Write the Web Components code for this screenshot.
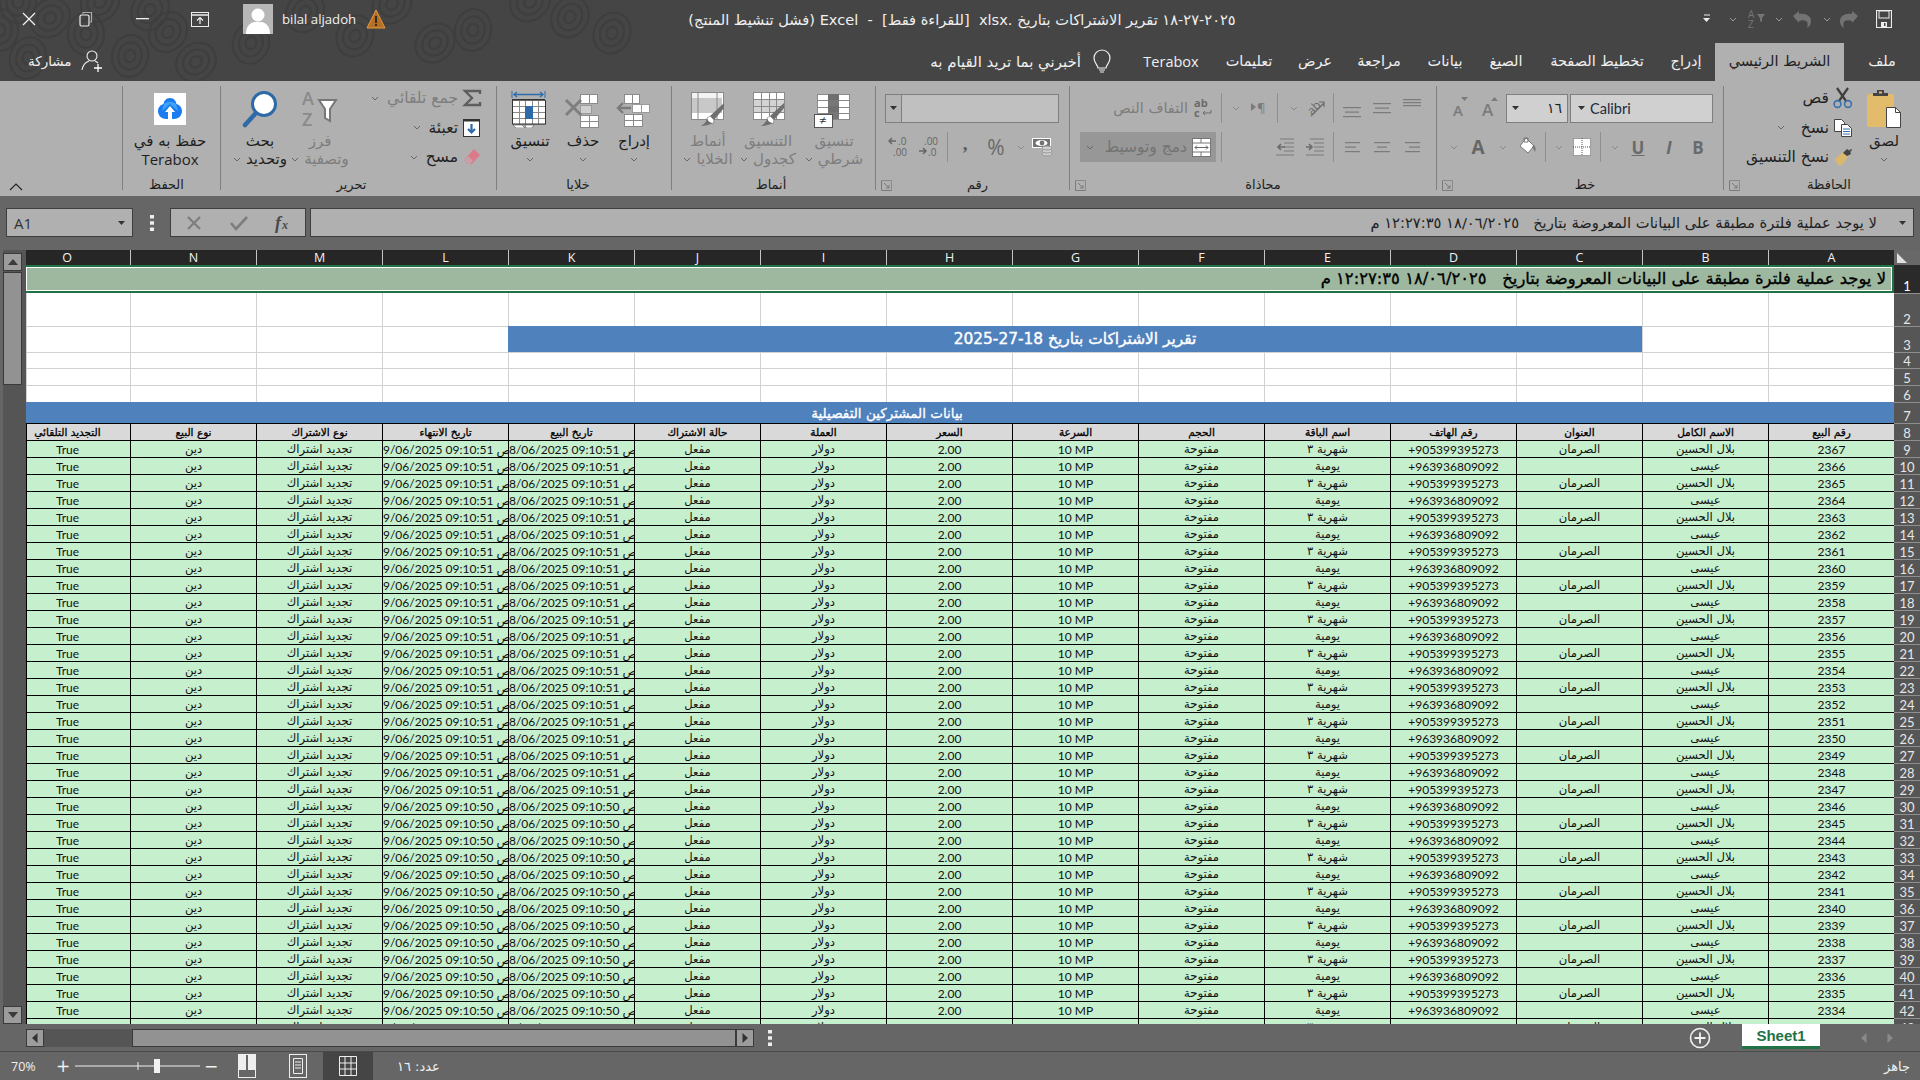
<!DOCTYPE html>
<html lang="ar" dir="rtl"><head><meta charset="utf-8"><title>Excel</title>
<style>
html,body{margin:0;padding:0;background:#666}
body{width:1920px;height:1080px;overflow:hidden;display:flex;flex-direction:column;font-family:"DejaVu Sans",sans-serif;font-size:15.5px;color:#1f1f1f}
.r{display:flex;align-items:center;height:30px}
.dis{color:#7d7d7d}
.txt{white-space:nowrap}
.stack3{display:flex;flex-direction:column;gap:5.5px}
.two{display:flex;flex-direction:column;gap:9px;padding-top:7px}
.fnt{display:flex;align-items:center;height:29px;box-sizing:border-box;border:1px solid #7f7f7f;background:#d0d0d0}
</style>
</head><body>
<x-titlebar>
<span slot="title">٢٠٢٥-٢٧-١٨ تقرير الاشتراكات بتاريخ .xlsx &nbsp;[للقراءة فقط] &nbsp;- &nbsp;Excel (فشل تنشيط المنتج)</span>
<span slot="user" dir="ltr">bilal aljadoh</span>
<x-tabs>
<x-tab w="76">ملف</x-tab><x-tab w="129" active>الشريط الرئيسي</x-tab><x-tab w="58">إدراج</x-tab><x-tab w="120">تخطيط الصفحة</x-tab><x-tab w="62">الصيغ</x-tab><x-tab w="60">بيانات</x-tab><x-tab w="72">مراجعة</x-tab><x-tab w="56">عرض</x-tab><x-tab w="76">تعليمات</x-tab><x-tab w="80" style="font-family:'Open Sans',sans-serif">Terabox</x-tab>
<span slot="help">أخبرني بما تريد القيام به</span><span slot="share">مشاركة</span>
</x-tabs></x-titlebar>
<x-ribbon>
<x-group w="197" pr="6" label="الحافظة" launch>
 <x-big w="60" l1="لصق" caret><x-ico n="paste"></x-ico></x-big>
 <div class="stack3" style="margin-right:1px">
  <x-small n="cut">قص</x-small><x-small n="copy" caret cg="16">نسخ</x-small><x-small n="painter">نسخ التنسيق</x-small>
 </div>
</x-group>
<x-group w="287" pr="10" label="خط" launch>
 <div class="two">
  <div class="r" style="height:30px"><div class="fnt" style="width:143px;padding:0 7px;gap:5px;font-family:Lato,sans-serif;font-size:14.5px;direction:ltr"><x-ico n="down"></x-ico><span style="color:#1c2a40;flex:1;text-align:left">Calibri</span></div><div class="fnt" style="width:62px;margin-right:2px;padding:0 5px;justify-content:space-between;font-size:14px"><span>١٦</span><x-ico n="down"></x-ico></div>
   <x-t w="28" style="margin-right:2px"><x-ico n="grow"></x-ico></x-t><x-t w="31"><x-ico n="shrink"></x-ico></x-t></div>
  <div class="r">
   <x-t w="30" style="font:700 17px 'Open Sans';color:#6a6a6a">B</x-t><x-t w="28" style="font:italic 700 17px 'Open Sans';color:#6a6a6a">I</x-t><x-t w="34" style="font:700 17px 'Open Sans';color:#6a6a6a;text-decoration:underline">U</x-t><x-t w="12"><x-ico n="cl"></x-ico></x-t>
   <x-t w="8"></x-t><x-sep></x-sep><x-t w="7"></x-t><x-t w="22"><x-ico n="border"></x-ico></x-t><x-t w="25"><x-ico n="cl"></x-ico></x-t><x-sep></x-sep><x-t w="36"><x-ico n="bucket"></x-ico></x-t><x-t w="12"><x-ico n="cl"></x-ico></x-t><x-t w="38" style="font:700 19px 'Open Sans';color:#666">A</x-t><x-t w="10"><x-ico n="cl"></x-ico></x-t>
  </div>
 </div>
</x-group>
<x-group w="367" label="محاذاة" launch>
 <div class="two">
  <div class="r">
   <x-t w="15"></x-t><x-t w="18"><x-ico n="atop"></x-ico></x-t><x-t w="12"></x-t><x-t w="18"><x-ico n="amid"></x-ico></x-t><x-t w="12"></x-t><x-t w="18"><x-ico n="abot"></x-ico></x-t><x-t w="9"></x-t><x-sep></x-sep><x-t w="3"></x-t><x-t w="28"><x-ico n="orient"></x-ico></x-t><x-t w="16"><x-ico n="cl"></x-ico></x-t><x-t w="8"></x-t><x-sep></x-sep><x-t w="3"></x-t><x-t w="30"><x-ico n="para"></x-ico></x-t><x-t w="16"><x-ico n="cl"></x-ico></x-t><x-t w="6"></x-t><x-sep></x-sep><x-t w="6"></x-t><x-t w="24"><x-ico n="wrap"></x-ico></x-t><span class="dis txt" style="margin-right:3px;font-size:14.500px">التفاف النص</span>
  </div>
  <div class="r">
   <x-t w="15"></x-t><x-t w="18"><x-ico n="aright"></x-ico></x-t><x-t w="12"></x-t><x-t w="18"><x-ico n="acenter"></x-ico></x-t><x-t w="12"></x-t><x-t w="18"><x-ico n="aleft"></x-ico></x-t><x-t w="9"></x-t><x-sep></x-sep><x-t w="9"></x-t><x-t w="18"><x-ico n="ind1"></x-ico></x-t><x-t w="12"></x-t><x-t w="18"><x-ico n="ind2"></x-ico></x-t><x-t w="54"></x-t><x-sep></x-sep><x-t w="5"></x-t>
   <div style="width:136px;height:30px;background:#979797;display:flex;align-items:center;flex:none"><x-t w="29"><x-ico n="merge"></x-ico></x-t><span class="txt" style="color:#737373;flex:1;font-size:15.500px">دمج وتوسيط</span><x-t w="20"><x-ico n="c"></x-ico></x-t></div>
  </div>
 </div>
</x-group>
<x-group w="194" pr="10" label="رقم" launch>
 <div class="two">
  <div class="r"><div class="fnt" style="width:174px;background:#c0c0c0;padding:0;direction:ltr"><x-t w="15" style="background:#b4b4b4;border-right:1px solid #7f7f7f;height:27px"><x-ico n="down"></x-ico></x-t></div></div>
  <div class="r" style="margin-right:-10px">
   <x-t w="14"></x-t><x-t w="24"><x-ico n="money"></x-ico></x-t><x-t w="20"><x-ico n="cl"></x-ico></x-t><x-t w="30" style="font:21px 'Open Sans';color:#6a6a6a">%</x-t><x-t w="32" style="font:700 19px 'Liberation Serif';color:#5c5c5c;padding-bottom:7px">,</x-t><x-t w="1"></x-t><x-sep></x-sep><x-t w="34"><x-ico n="dec1"></x-ico></x-t><x-t w="28"><x-ico n="dec2"></x-ico></x-t>
  </div>
 </div>
</x-group>
<x-group w="204" pr="5" label="أنماط">
 <x-big w="72" dis l1="تنسيق" l2="شرطي" caret><x-ico n="cond"></x-ico></x-big>
 <x-big w="60" dis l1="التنسيق" l2="كجدول" caret><x-ico n="table"></x-ico></x-big>
 <x-big w="60" dis l1="أنماط" l2="الخلايا" caret><x-ico n="cstyle"></x-ico></x-big>
</x-group>
<x-group w="175" pr="12" label="خلايا">
 <x-big w="50" l1="إدراج" caret><x-ico n="ins"></x-ico></x-big>
 <x-big w="52" l1="حذف" caret><x-ico n="del"></x-ico></x-big>
 <x-big w="54" l1="تنسيق" caret><x-ico n="fmt"></x-ico></x-big>
</x-group>
<x-group w="276" pr="14" label="تحرير">
 <div class="stack3" style="width:132px">
  <x-small n="sigma" caret class="dis">جمع تلقائي</x-small><x-small n="fill" caret>تعبئة</x-small><x-small n="eraser" caret>مسح</x-small>
 </div>
 <x-big w="60" dis l1="فرز" l2="وتصفية" caret><x-ico n="sort"></x-ico></x-big>
 <x-big w="60" l1="بحث" l2="وتحديد" caret><x-ico n="find"></x-ico></x-big>
</x-group>
<x-group w="98" pr="10" label="الحفظ">
 <x-big w="80" l1="حفظ به في" l2="<span class='lat'>Terabox</span>"><x-ico n="terabox"></x-ico></x-big>
</x-group>
</x-ribbon>
<x-formula>لا يوجد عملية فلترة مطبقة على البيانات المعروضة بتاريخ &nbsp;&nbsp;١٨/٠٦/٢٠٢٥ ١٢:٢٧:٣٥ م</x-formula>
<div style="display:flex;direction:ltr;flex:none;height:774px"><x-vscroll></x-vscroll><x-sheet></x-sheet></div>
<x-foot>Sheet1</x-foot>
<x-status><span slot="count">عدد: ١٦</span>جاهز</x-status>
<script>
const G='#7b7b7b';
const lines=(w,h,arr,c=G)=>`<svg width="${w}" height="${h}" viewBox="0 0 ${w} ${h}">`+arr.map(a=>`<rect x="${a[0]}" y="${a[1]}" width="${a[2]}" height="1.2" fill="${c}"/>`).join('')+`</svg>`;
const svg=(w,h,b,vb)=>`<svg width="${w}" height="${h}" viewBox="${vb||`0 0 ${w} ${h}`}">${b}</svg>`;
const gridc=(x,y,w,h,cols,rows,fill='#fff',st='#8a8a8a')=>{let s=`<rect x="${x+.5}" y="${y+.5}" width="${w}" height="${h}" fill="${fill}" stroke="${st}"/>`;for(let i=1;i<cols;i++){const X=Math.round(x+w*i/cols)+.5;s+=`<path d="M${X} ${y}v${h}" stroke="${st}"/>`}for(let i=1;i<rows;i++){const Y=Math.round(y+h*i/rows)+.5;s+=`<path d="M${x} ${Y}h${w}" stroke="${st}"/>`}return s};
const brush=(x,y)=>`<g transform="translate(${x} ${y})"><path d="M23 0v5L13 17l-4-4z" fill="#6f6f6f"/><path d="M9 13l4 4-1 4-5-2-1-4z" fill="#fff" stroke="#6f6f6f" stroke-width=".6"/><path d="M6 16c1 2 3 4 6 4-4 2-8 3-12 3 3-2 5-4 6-7z" fill="#6f6f6f"/></g>`;
const I={
c:svg(8,5,`<path d="M1 1l3 3 3-3" fill="none" stroke="#666" stroke-width="1"/>`),
cl:svg(8,5,`<path d="M1 1l3 3 3-3" fill="none" stroke="#8a8a8a" stroke-width="1"/>`),
cu:svg(14,8,`<path d="M1 7l6-6 6 6" fill="none" stroke="#222" stroke-width="1.1"/>`),
down:svg(7,4,`<path d="M0 0h7l-3.5 4z" fill="#333"/>`),
launch:svg(11,11,`<path d="M.5 .5h10v10" fill="none" stroke="#8a8a8a"/><path d="M.5 .5v10h10M3 3l5 5M8 5v3H5" fill="none" stroke="#7a7a7a"/>`),
grow:svg(20,24,`<text x="2" y="20" font-size="17" font-weight="600" font-family="Open Sans" fill="#7b7b7b">A</text><path d="M11 5h7l-3.500-4z" fill="#7b7b7b"/>`),
shrink:svg(20,24,`<text x="2" y="20" font-size="15" font-weight="600" font-family="Open Sans" fill="#7b7b7b">A</text><path d="M10 1h7l-3.500 4z" fill="#7b7b7b"/>`),
paste:svg(38,38,`<rect x="2" y="4" width="27" height="33" rx="2" fill="#e2bb6b"/><path d="M8 6h15V3h-4V0h-7v3H8z" fill="#444"/><rect x="14" y="1.5" width="3" height="2" fill="#e2bb6b"/><path d="M21.5 17.5h9l5 5v15h-14z" fill="#fff" stroke="#444"/><path d="M30.5 17.5v5h5" fill="none" stroke="#444"/>`),
cut:svg(20,22,`<path d="M4 1l9 13M15 1L6 14" stroke="#3f3f3f" stroke-width="2.2" fill="none"/><circle cx="4.5" cy="17" r="3.4" fill="none" stroke="#3a70ad" stroke-width="1.6"/><circle cx="15" cy="17" r="3.4" fill="none" stroke="#3a70ad" stroke-width="1.6"/>`),
copy:svg(20,20,`<path d="M1.5 1.5h7l3 3v9h-10z" fill="#fff" stroke="#444"/><path d="M8.5 6.5h6l4 4v8h-10z" fill="#fff" stroke="#444"/><path d="M10 11h7M10 13.5h7M10 16h7" stroke="#2f6db0"/>`),
painter:svg(20,18,`<path d="M2 11l8-7 5 5-6 8H5z" fill="#dcb86c"/><path d="M10 5l4-4 3 2 1 3-4 2z" fill="#444"/><path d="M16 2l3-1-1 3z" fill="#444"/>`),
border:svg(18,18,`<rect x=".5" y=".5" width="17" height="17" fill="#fff" stroke="#666" stroke-dasharray="1 1"/><path d="M9 0v18M0 9h18" stroke="#555" stroke-dasharray="1 1"/>`),
bucket:svg(20,20,`<path d="M9 1l8 8-6 7-8-7z" fill="#fff" stroke="#777"/><path d="M7 1h4v4H7z" fill="none" stroke="#777"/><path d="M17 8c2 2 2 5 1 7-1-2-2-4-3-5z" fill="#777"/>`),
atop:lines(18,30,[[0,6,18],[0,9,18],[0,12,18]]),
amid:lines(18,30,[[0,10,18],[2,14.5,14],[0,19,18]]),
abot:lines(18,30,[[0,14,18],[2,18.5,14],[0,23,18]]),
aright:lines(15,30,[[0,10,15],[4,14.5,11],[0,19,15]]),
acenter:lines(16,30,[[0,10,16],[3,14.5,10],[0,19,16]]),
aleft:lines(15,30,[[0,10,15],[0,14.5,11],[0,19,15]]),
ind1:svg(18,18,`<path d="M4 1h14M8 5h10M8 9h10M8 13h10M0 17h18" stroke="${G}"/><path d="M0 9h6M3 6l3 3-3 3" stroke="#6b6b6b" stroke-width="1.6" fill="none"/>`),
ind2:svg(18,18,`<path d="M0 1h14M0 5h10M0 9h10M0 13h10M0 17h18" stroke="${G}" transform="translate(18 0) scale(-1 1)"/><path d="M12 9H5M8 6L5 9l3 3" stroke="#6b6b6b" stroke-width="1.6" fill="none" transform="translate(-3 0)"/>`),
orient:svg(20,20,`<text x="1" y="14" font-size="12" font-family="Open Sans" fill="#6b6b6b" transform="rotate(-45 8 10)">ab</text><path d="M5 18L18 5M13 4h5v5" stroke="#6b6b6b" fill="none" stroke-width="1.2"/>`),
para:svg(16,14,`<path d="M0 2l5 4-5 4z" fill="#7b7b7b"/><text x="6" y="12" font-size="13" font-family="Open Sans" fill="#7b7b7b">¶</text>`),
wrap:svg(18,20,`<text x="0" y="9" font-size="11" font-weight="700" font-family="Open Sans" fill="#6b6b6b">ab</text><text x="0" y="19" font-size="11" font-weight="700" font-family="Open Sans" fill="#6b6b6b">c</text><path d="M17 12v3H9M11 13l-2 2 2 2" fill="none" stroke="#6b6b6b"/>`),
merge:svg(19,19,`<rect x=".5" y=".5" width="18" height="18" fill="#fff" stroke="#777"/><path d="M0 5h19M0 14h19M9 0v5M9 14v5" stroke="#777"/><path d="M3 9.5h13M5 7.5l-2 2 2 2M14 7.5l2 2-2 2" stroke="#666" fill="none"/>`),
money:svg(22,20,`<rect x="0" y="1" width="19" height="10" fill="#fff"/><rect x="1" y="2" width="17" height="8" fill="#737373"/><ellipse cx="9.5" cy="6" rx="6" ry="3" fill="#fff"/><circle cx="10" cy="6" r="2.4" fill="#737373"/><g fill="#cfcfcf" stroke="#999"><ellipse cx="15" cy="17" rx="5" ry="2"/><ellipse cx="15" cy="14" rx="5" ry="2"/><ellipse cx="15" cy="11" rx="5" ry="2"/></g>`),
dec1:svg(22,22,`<text x="5" y="9" font-size="10" font-family="Open Sans" fill="#666">.00</text><path d="M0 15h7M4 12l3 3-3 3" stroke="#666" stroke-width="1.5" fill="none"/><text x="9" y="20" font-size="10" font-family="Open Sans" fill="#666">.0</text>`),
dec2:svg(22,22,`<path d="M8 5H1M4 2L1 5l3 3" stroke="#666" stroke-width="1.5" fill="none"/><text x="10" y="9" font-size="10" font-family="Open Sans" fill="#666">.0</text><text x="5" y="20" font-size="10" font-family="Open Sans" fill="#666">.00</text>`),
cond:svg(42,38,gridc(4,4,32,25,3,4)+`<path d="M15 4h11v6H15zM15 16h11v6H15z" fill="#6f6f6f"/><path d="M15 10h11v6H15zM15 22h11v7H15z" fill="#777"/><rect x="1.500" y="24.500" width="18" height="13" fill="#fff" stroke="#555"/><text x="6" y="35" font-size="13" font-family="Open Sans" fill="#333">≠</text>`),
table:svg(38,38,gridc(4,2,31,27,4,4,'#fff','#8a8a8a')+`<rect x="4" y="9" width="31" height="14" fill="#c8c8c8" opacity=".8"/>`+gridc(4,2,31,27,4,4,'none','#8a8a8a')+brush(12,13)),
cstyle:svg(38,38,gridc(2,2,32,27,1,1,'#fff','#8a8a8a')+`<rect x="3" y="8" width="30" height="15" fill="#c8c8c8"/><rect x="3" y="3" width="30" height="5" fill="#f3f3f3"/><path d="M9 2v27M28 2v27" stroke="#8a8a8a"/>`+brush(12,13)),
ins:svg(38,38,gridc(9,4,15,9,2,1,'#fff','#8a8a8a')+gridc(9,24,18,12,2,2,'#fff','#8a8a8a')+gridc(17,14,17,8,2,1,'#fff','#9a9a9a')+`<path d="M16 18H3M8 13l-5 5 5 5" fill="none" stroke="#7b7b7b" stroke-width="2.4"/>`),
del:svg(38,38,gridc(16,4,17,9,2,1,'#fff','#8a8a8a')+gridc(16,15,11,8,1,1,'#d0d0d0','#9a9a9a')+gridc(16,25,18,12,2,2,'#fff','#8a8a8a')+`<path d="M2 10l15 15M17 10L2 25" stroke="#7f7f7f" stroke-width="3"/>`),
fmt:svg(38,38,`<path d="M1 1v7M34 1v7" stroke="#2e6aa8"/><path d="M3 4.500h29" stroke="#2e6aa8" stroke-width="1.5"/><path d="M6 2L3 4.500 6 7M29 2l3 2.500-3 2.500" stroke="#2e6aa8" fill="none" stroke-width="1.300"/>`+gridc(1,10,33,24,5,4,'#fff','#8a8a8a')+`<rect x="1" y="9" width="33" height="1.400" fill="#333"/><path d="M1.500 10v24h33V10" fill="none" stroke="#333"/><rect x="14" y="16" width="8" height="13" fill="#2e6aa8"/><path d="M2 35h9l3 3H5zM14 35h9l-2 3h-6z" fill="#fff" stroke="#555" stroke-width=".6"/>`),
sigma:svg(20,18,`<path d="M18 5V2H3l7 7-7 7h15v-3" fill="none" stroke="#5e5e5e" stroke-width="2.4"/>`),
fill:svg(18,18,`<rect x=".5" y=".5" width="16" height="17" fill="#fff" stroke="#333"/><rect x="0" y="0" width="17" height="2.500" fill="#333"/><path d="M8.500 5v8M5 10l3.500 3.500L12 10" fill="none" stroke="#2e6aa8" stroke-width="2.200"/>`),
eraser:svg(18,18,`<path d="M11 1l6 6-8 9H5L1 12z" fill="#dd7a8a"/><path d="M1 12l4-4 5 5-3 3H5z" fill="#c9a0a8"/>`),
sort:svg(36,38,`<text x="0" y="15" font-size="18" font-weight="600" font-family="Open Sans" fill="#8a8a8a">A</text><text x="0" y="36" font-size="18" font-weight="600" font-family="Open Sans" fill="#8a8a8a">Z</text><path d="M17 10h17l-6 9v12l-5-3v-9z" fill="#fff" stroke="#777" stroke-width="2"/>`),
find:svg(38,38,`<circle cx="23" cy="14" r="11.500" fill="#fff" stroke="#2e6aa8" stroke-width="3"/><path d="M14 24L4 35" stroke="#2e6aa8" stroke-width="4.500" stroke-linecap="round"/>`),
terabox:svg(32,32,`<rect width="32" height="32" fill="#fff"/><path d="M16 5c-4 0-6 3-6.500 6C6 12 4 15 4 18c0 5 4 8 8 8h8c4 0 8-3 8-8 0-3-2-6-5.500-7C22 8 20 5 16 5z" fill="#1a7cf0"/><path d="M10 11c3-3 9-3 12 0l2 7-8-7-8 7z" fill="#3ea2f7"/><path d="M16 13l5 6h-3v7h-4v-7h-3z" fill="#fff"/>`),
x:svg(16,16,`<path d="M2 2l12 12M14 2L2 14" stroke="#f2f2f2" stroke-width="1.300"/>`),
restore:svg(14,16,`<rect x="1" y="4" width="9" height="11" rx="1.500" fill="none" stroke="#eee" stroke-width="1.200"/><path d="M4 3V1.500h8.500V11H11" fill="none" stroke="#aaa" stroke-width="1.200"/>`),
min:svg(13,2,`<rect width="13" height="1.300" fill="#eee"/>`),
rd:svg(18,15,`<rect x=".5" y=".5" width="17" height="14" fill="none" stroke="#eee"/><path d="M0 3h18" stroke="#eee" stroke-width="1.500"/><path d="M9 12V6M6 8.500L9 5.500l3 3" fill="none" stroke="#eee" stroke-width="1.200"/>`),
warn:svg(20,20,`<path d="M10 1l9 18H1z" fill="#b76f21" stroke="#e39a44"/><path d="M9 7h2v7H9zM9 15h2v2H9z" fill="#2c2c2c"/>`),
save:svg(16,18,`<path d="M.5.5h15v17H.5z" fill="none" stroke="#ededed" stroke-width="1.200"/><rect x="3" y="1" width="10" height="7" fill="none" stroke="#ededed"/><rect x="5" y="12" width="6" height="5" fill="#ededed"/><rect x="8" y="13" width="1.500" height="3" fill="#454545"/>`),
undo:svg(20,18,`<path d="M1 6l6-5v3c7-1 12 2 12 7 0 3-1 5-4 7 1-3 1-6-1-7-2-1-4-1-7 0v2z" fill="#737373"/>`),
redo:svg(20,18,`<g transform="translate(20 0) scale(-1 1)"><path d="M1 6l6-5v3c7-1 12 2 12 7 0 3-1 5-4 7 1-3 1-6-1-7-2-1-4-1-7 0v2z" fill="#737373"/></g>`),
az:svg(18,20,`<text x="0" y="9" font-size="10" font-family="Open Sans" fill="#757575">A</text><text x="0" y="19" font-size="10" font-family="Open Sans" fill="#757575">Z</text><path d="M9 5h8l-3 4v4l-2-1V9z" fill="#757575"/>`),
qc:svg(8,5,`<path d="M1 1l3 3 3-3" fill="none" stroke="#9a9a9a"/>`),
cust:svg(8,10,`<path d="M1 1h6" stroke="#eee"/><path d="M0 4h7L3.500 8z" fill="#eee"/>`),
bulb:svg(18,26,`<path d="M5 19c0-3-4-5-4-10a8 8 0 0 1 16 0c0 5-4 7-4 10z" fill="none" stroke="#f0f0f0" stroke-width="1.200"/><path d="M6 21h6M7 23h4" stroke="#f0f0f0" stroke-width="1.200"/>`),
share:svg(22,24,`<circle cx="11" cy="7" r="5" fill="none" stroke="#eee" stroke-width="1.100"/><path d="M1 21c1-5 4-8 7-9M14 12c1 .5 2 1 3 2" fill="none" stroke="#eee" stroke-width="1.100"/><path d="M17 15v8M13 19h8" stroke="#fff" stroke-width="1.300"/>`),
fx:svg(22,24,`<text x="2" y="18" font-size="18" font-style="italic" font-weight="700" font-family="Liberation Serif" fill="#4a4a4a">f</text><text x="9" y="18" font-size="12" font-style="italic" font-weight="700" font-family="Liberation Serif" fill="#4a4a4a">x</text>`),
fcancel:svg(16,16,`<path d="M2 2l12 12M14 2L2 14" stroke="#7d7d7d" stroke-width="2.200"/>`),
fok:svg(18,16,`<path d="M1 8l5 6L17 2" fill="none" stroke="#7d7d7d" stroke-width="2.600"/>`),
dots:svg(4,16,`<path d="M0 0h4v3.500H0zM0 6.200h4v3.500H0zM0 12.400h4v3.500H0z" fill="#eee"/>`),
tl:svg(6,10,`<path d="M5.500 0v10L0 5z" fill="#333"/>`),
tr:svg(6,10,`<path d="M.5 0v10L6 5z" fill="#333"/>`),
tu:svg(10,6,`<path d="M0 6h10L5 0z" fill="#3a3a3a"/>`),
td:svg(10,6,`<path d="M0 0h10L5 6z" fill="#3a3a3a"/>`),
ntl:svg(6,10,`<path d="M5.500 0v10L0 5z" fill="#8a8a8a"/>`),
ntr:svg(6,10,`<path d="M.5 0v10L6 5z" fill="#8a8a8a"/>`),
add:svg(24,24,`<circle cx="12" cy="12" r="9.500" fill="none" stroke="#f2f2f2" stroke-width="1.600"/><path d="M12 6.500v11M6.500 12h11" stroke="#f2f2f2" stroke-width="1.800"/>`),
v1:svg(18,24,`<rect x=".5" y=".5" width="17" height="23" fill="none" stroke="#eee"/><rect x="1" y="1" width="7" height="15" fill="#eee"/><rect x="10" y="1" width="7" height="15" fill="#eee"/>`),
v2:svg(18,24,`<rect x=".5" y=".5" width="17" height="23" fill="none" stroke="#eee"/><path d="M4.500 4.500h9v15h-9z" fill="none" stroke="#eee"/><path d="M6 8h6M6 11h6M6 14h6" stroke="#eee"/>`),
v3:svg(18,20,`<path d="M.5.500h17v19H.500zM6 .500v19M12 .500v19M.5 7h17M.5 13h17" fill="none" stroke="#eee"/>`),
slider:svg(125,28,`<path d="M0 14h125" stroke="#eee"/><path d="M63 10v8" stroke="#eee"/><rect x="79" y="7" width="6" height="14" fill="#f2f2f2"/>`),
corner:svg(10,10,`<path d="M0 10V0l10 10z" fill="#e0e0e0"/>`)
};
class XIco extends HTMLElement{constructor(){super();this.attachShadow({mode:'open'}).innerHTML=`<style>:host{display:inline-flex;align-items:center;justify-content:center;flex:none}svg{display:block;direction:ltr}</style>`+(I[this.getAttribute('n')]||'')}}
class XT extends HTMLElement{constructor(){super();this.attachShadow({mode:'open'}).innerHTML=`<style>:host{display:inline-flex;align-items:center;justify-content:center;flex:none;height:100%}</style><slot></slot>`}connectedCallback(){this.style.width=this.getAttribute('w')+'px'}}
class XSep extends HTMLElement{constructor(){super();this.attachShadow({mode:'open'}).innerHTML=`<style>:host{display:block;flex:none;height:100%;width:1px;background:#8f8f8f}</style>`}}
class XBig extends HTMLElement{constructor(){super();const l2=this.getAttribute('l2'),car=this.hasAttribute('caret');const c=this.hasAttribute('dis')?'#7d7d7d':'#1f1f1f';
this.attachShadow({mode:'open'}).innerHTML=`<style>:host{display:flex;flex-direction:column;align-items:center;flex:none;color:${c};font-size:15px}.i{height:46px;display:flex;align-items:center;justify-content:center}.l{height:18px;line-height:18px;white-space:nowrap;display:flex;align-items:center;gap:5px}.c{height:18px;display:flex;align-items:center}.lat{font:15px "Open Sans",sans-serif}</style><div class="i"><slot></slot></div><div class="l">${this.getAttribute('l1')}</div>${l2!==null?`<div class="l">${l2}${car?'<x-ico n="c"></x-ico>':''}</div>`:(car?'<div class="c"><x-ico n="c"></x-ico></div>':'')}`}
connectedCallback(){if(this.getAttribute('w'))this.style.width=this.getAttribute('w')+'px'}}
class XSmall extends HTMLElement{constructor(){super();this.attachShadow({mode:'open'}).innerHTML=`<style>:host{display:flex;align-items:center;height:24px;white-space:nowrap}.i{width:20px;display:flex;justify-content:center;flex:none;margin-inline-end:4px}.c{margin-inline-start:${this.getAttribute('cg')||8}px;display:flex}</style><span class="i"><x-ico n="${this.getAttribute('n')}"></x-ico></span><slot></slot>${this.hasAttribute('caret')?'<span class="c"><x-ico n="c"></x-ico></span>':''}`}}
class XGroup extends HTMLElement{constructor(){super();this.attachShadow({mode:'open'}).innerHTML=`<style>:host{display:flex;flex-direction:column;flex:none;box-sizing:border-box;height:104px;margin-top:5px;border-left:1px solid #7f7f7f}.b{flex:1;min-height:0;display:flex;align-items:flex-start}.f{height:14px;display:flex;align-items:center;font-size:13px;line-height:14px;color:#1f1f1f;flex:none;padding-top:2px;margin-bottom:-2px}.f span{flex:1;text-align:center}.lc{width:20px;display:flex;justify-content:center}</style><div class="b"><slot></slot></div><div class="f"><span>${this.getAttribute('label')||''}</span>${this.hasAttribute('launch')?'<div class="lc"><x-ico n="launch"></x-ico></div>':''}</div>`}
connectedCallback(){this.style.width=this.getAttribute('w')+'px';this.style.paddingRight=(this.getAttribute('pr')||0)+'px'}}
class XRibbon extends HTMLElement{constructor(){super();this.attachShadow({mode:'open'}).innerHTML=`<style>:host{display:flex;flex:none;height:115px;background:#b0b0b0;position:relative}.u{flex:1;display:flex;align-items:flex-end;justify-content:flex-end;padding:0 0 5px 9px}</style><slot></slot><div class="u"><x-ico n="cu"></x-ico></div>`}}
class XTitlebar extends HTMLElement{constructor(){super();const pts=[[0,30],[28,58],[50,18],[86,34],[100,2],[150,10],[168,32],[196,62],[251,43],[305,12],[355,36],[392,4],[435,43],[473,30],[530,2],[570,17],[612,33],[18,2],[130,56]];
let rings='';pts.forEach(p=>{[6,13,20].forEach((r,i)=>{rings+=`<ellipse cx="${p[0]}" cy="${p[1]}" rx="${r*.9}" ry="${r*1.05}" fill="none" stroke="#3e3e3e" stroke-width="2" transform="rotate(${(p[0]*7)%60} ${p[0]} ${p[1]})"/>`})});
this.attachShadow({mode:'open'}).innerHTML=`<style>:host{display:block;flex:none;height:81px;background:#454545;color:#f0f0f0;position:relative;overflow:hidden}
svg.bg{position:absolute;left:0;top:0;pointer-events:none}
.top{position:relative;height:43px;box-sizing:border-box;padding-bottom:5px;display:grid;grid-template-columns:1fr auto 1fr;align-items:center;font-size:14.6px}
.tt{white-space:nowrap;padding-left:4px}
.qat,.win{display:flex;align-items:center;height:38px}
.qat{padding-right:19px}
.win{direction:ltr;justify-self:end;justify-content:flex-start;font:14px "Open Sans",sans-serif}
.cell{display:flex;justify-content:center;align-items:center;flex:none}
.av{width:30px;height:30px;background:#b7b7b7;margin-left:15px;overflow:hidden}
.bot{position:relative;height:38px}
</style><svg class="bg" width="700" height="81">${rings}</svg>
<div class="top"><div class="qat">
<span class="cell" style="width:34px"><x-ico n="save"></x-ico></span><span class="cell" style="width:36px"><x-ico n="redo"></x-ico></span><span class="cell" style="width:8px"><x-ico n="qc"></x-ico></span><span class="cell" style="width:42px"><x-ico n="undo"></x-ico></span><span class="cell" style="width:5px"><x-ico n="qc"></x-ico></span><span class="cell" style="width:38px"><x-ico n="az"></x-ico></span><span class="cell" style="width:10px"><x-ico n="qc"></x-ico></span><span class="cell" style="width:43px"><x-ico n="cust"></x-ico></span>
</div><div class="tt"><slot name="title"></slot></div>
<div class="win"><span class="cell" style="width:57px"><x-ico n="x"></x-ico></span><span class="cell" style="width:57px"><x-ico n="restore"></x-ico></span><span class="cell" style="width:57px"><x-ico n="min"></x-ico></span><span class="cell" style="width:57px"><x-ico n="rd"></x-ico></span>
<div class="av"><svg width="30" height="30"><circle cx="15" cy="11" r="6.500" fill="#fff"/><path d="M3 30c0-8 4-11 8-12h8c4 1 8 4 8 12z" fill="#fff"/></svg></div>
<span style="margin-left:9px;width:84px;white-space:nowrap;font-size:13.2px"><slot name="user"></slot></span><x-ico n="warn"></x-ico></div></div>
<div class="bot"><slot></slot></div>`}}
class XTabs extends HTMLElement{constructor(){super();this.attachShadow({mode:'open'}).innerHTML=`<style>:host{display:flex;height:38px;align-items:stretch;font-size:14.5px;color:#f0f0f0}.sp{flex:1}.h{display:flex;align-items:center;white-space:nowrap;font-size:15px}.s{display:flex;align-items:center;gap:9px;padding-left:28px;padding-bottom:2px;white-space:nowrap;font-size:13.500px}</style><slot></slot><div class="h" style="margin-right:20px"><x-ico n="bulb" style="margin-left:12px"></x-ico><slot name="help"></slot></div><div class="sp"></div><div class="s"><x-ico n="share"></x-ico><slot name="share"></slot></div>`}}
class XTab extends HTMLElement{constructor(){super();this.attachShadow({mode:'open'}).innerHTML=`<style>:host{display:flex;align-items:center;justify-content:center;flex:none;white-space:nowrap;padding-bottom:2px;box-sizing:border-box}:host([active]){background:#b0b0b0;color:#222}</style><slot></slot>`}connectedCallback(){this.style.width=this.getAttribute('w')+'px'}}
class XFormula extends HTMLElement{constructor(){super();this.attachShadow({mode:'open'}).innerHTML=`<style>:host{display:flex;flex:none;height:54px;background:#666;box-sizing:border-box;padding:12px 6px 13px 6px;direction:ltr;align-items:stretch}.bx{box-sizing:border-box;background:#b0b0b0;border:1px solid #3e3e3e;display:flex;align-items:center}.nm{width:127px;padding:0 7px;justify-content:space-between;font:15px "Open Sans",sans-serif;color:#333}.d{width:37px;display:flex;justify-content:center;align-items:center}.fx{width:136px;margin-right:4px}.fx x-ico{width:45px}.f{flex:1;direction:rtl;padding:0 6px;justify-content:flex-start;font-size:14.7px;color:#222;white-space:pre}.ca{margin-inline-end:22px;margin-inline-start:1px;display:flex}.t{flex:1}</style><div class="bx nm"><span>A1</span><x-ico n="down"></x-ico></div><div class="d"><x-ico n="dots"></x-ico></div><div class="bx fx"><x-ico n="fcancel"></x-ico><x-ico n="fok"></x-ico><x-ico n="fx"></x-ico></div><div class="bx f"><span class="ca"><x-ico n="down"></x-ico></span><span class="t"><slot></slot></span></div>`}}
class XVScroll extends HTMLElement{constructor(){super();this.attachShadow({mode:'open'}).innerHTML=`<style>:host{display:flex;flex:none;width:26px;background:#666;box-sizing:border-box;padding-left:3px}.t{width:19px;background:#555;display:flex;flex-direction:column;box-sizing:border-box;padding-top:3px;height:774px}.b{height:18px;box-sizing:border-box;border:1px solid #3a3a3a;background:#9c9c9c;display:flex;align-items:center;justify-content:center;flex:none}.th{height:113px;margin-top:1px;box-sizing:border-box;border:1px solid #3a3a3a;background:#929292;flex:none}.sp{flex:1}.rest{width:4px;background:#555}</style><div class="t"><div class="b"><x-ico n="tu"></x-ico></div><div class="th"></div><div class="sp"></div><div class="b"><x-ico n="td"></x-ico></div></div><div class="rest"></div>`}}
class XSheet extends HTMLElement{constructor(){super();
const cols='ABCDEFGHIJKLMNO'.split('');
const oc=i=>i==14?' oc':'';
let h='<div class="c ch corner"><x-ico n="corner"></x-ico></div>'+cols.map((c,i)=>`<div class="c ch${oc(i)}">${c}</div>`).join('');
const hr=(n,cl='')=>`<div class="c rh ${cl}">${n}</div>`;
h+=hr(1,'on')+`<div class="sel"><span>لا يوجد عملية فلترة مطبقة على البيانات المعروضة بتاريخ &nbsp;&nbsp;١٨/٠٦/٢٠٢٥ ١٢:٢٧:٣٥ م</span></div>`;
h+=hr(2)+cols.map(()=>`<div class="c g" style="border-top:0"></div>`).join('');
h+=hr(3)+`<div class="c g"></div><div class="c g"></div><div class="merge" style="grid-column:span 9">تقرير الاشتراكات بتاريخ 18-27-2025</div>`+[0,1,2,3].map(()=>'<div class="c g"></div>').join('');
[4,5,6].forEach(n=>{h+=hr(n)+cols.map(()=>'<div class="c g"></div>').join('')});
h+=hr(7)+`<div class="band">بيانات المشتركين التفصيلية</div>`;
const hd=['رقم البيع','الاسم الكامل','العنوان','رقم الهاتف','اسم الباقة','الحجم','السرعة','السعر','العملة','حالة الاشتراك','تاريخ البيع','تاريخ الانتهاء','نوع الاشتراك','نوع البيع','التجديد التلقائي'];
h+=hr(8)+hd.map((t,i)=>`<div class="c d hd${oc(i)}">${t}</div>`).join('');
const ar=new Set([1,2,4,5,8,9,12,13]);
for(let i=0;i<35;i++){const odd=i%2==0,sec=i<21?'51':'50';
const v=[String(2367-i),odd?'بلال الحسين':'عيسى',odd?'الصرمان':'',odd?'+905399395273':'+963936809092',odd?'شهرية ٣':'يومية','مفتوحة','10 MP','2.00','دولار','مفعل',`18/06/2025 09:10:${sec} ص`,`19/06/2025 09:10:${sec} ص`,'تجديد اشتراك','دين','True'];
h+=hr(9+i)+v.map((t,j)=>`<div class="c d dt${ar.has(j)?' ar':''}${oc(j)}${j==10||j==11?' dts':''}"><span ${j==10||j==11||j==3||j==6?'dir="ltr"':''}>${t}</span></div>`).join('');}
this.attachShadow({mode:'open'}).innerHTML=`<style>:host{display:block;flex:none;width:1894px;height:774px;overflow:hidden;background:#fff}
.g0{display:grid;direction:rtl;grid-template-columns:26px repeat(14,126px) 104px;grid-template-rows:15px 28px 33px 26px 16px 17px 17px 21px 17px repeat(35,17px);font-family:Lato,"DejaVu Sans",sans-serif;font-size:12px;color:#111}
.c{box-sizing:border-box;display:flex;align-items:center;justify-content:center;overflow:hidden;white-space:nowrap;min-width:0}
.oc{padding-right:22px}
.dts{padding-right:4px}
.ch{background:#262626;color:#f2f2f2;border-left:1px solid #c4c4c4;font-size:12.5px;font-family:"Open Sans",sans-serif}
.ch:nth-child(16){border-left:0}
.corner{background:#686868;border-left:0;justify-content:flex-end;padding-left:3px}
.rh{background:#565656;color:#e6e6e6;border-top:1px solid #8f8f8f;font-size:13px;align-items:flex-end;line-height:14px}
.rh.on{background:#2a2a2a;color:#fff;border-top:0}
.g{background:#fff;border-left:1px solid #d2d2d2;border-top:1px solid #d2d2d2}
.sel{grid-column:2/-1;box-sizing:border-box;background:#9db89f;border:2px solid #217346;border-left:0;box-shadow:inset 0 0 0 1px #fff;font:16.4px/22px "DejaVu Sans",sans-serif;-webkit-text-stroke:.35px #000;color:#000;padding:0 6px;display:flex;align-items:center;white-space:pre}
.merge{background:#4f81bd;color:#fff;font:15.4px "DejaVu Sans",sans-serif;-webkit-text-stroke:.4px #fff;display:flex;align-items:center;justify-content:center;white-space:nowrap}
.band{grid-column:2/-1;background:#4f81bd;color:#fff;font:13.5px "DejaVu Sans",sans-serif;-webkit-text-stroke:.3px #fff;display:flex;align-items:center;justify-content:center;padding-right:146px;white-space:nowrap}
.d{border-top:1px solid #000;border-left:1px solid #000}
.hd{background:#d9d9d9;font:10.5px "DejaVu Sans",sans-serif;-webkit-text-stroke:.3px #000;color:#000}
.dt{background:#c6efce}
.dt.ar{font:11.6px "DejaVu Sans",sans-serif}
.dt span{flex:none}
</style><div class="g0">${h}</div>`}}
class XFoot extends HTMLElement{constructor(){super();this.attachShadow({mode:'open'}).innerHTML=`<style>:host{display:flex;flex:none;height:28px;background:#666;direction:ltr;box-sizing:border-box;border-bottom:1px solid #4a4a4a}.cell{flex:none;display:flex;align-items:center;justify-content:center}.sb{display:flex;height:18px;margin:5px 0 0 26px;flex:none}.btn{width:18px;box-sizing:border-box;border:1px solid #3a3a3a;background:#9c9c9c;display:flex;align-items:center;justify-content:center}.tr{width:88px;background:#555}.th{width:604px;box-sizing:border-box;border:1px solid #3a3a3a;background:#929292}.sp{flex:1}.tab{width:78px;height:25px;background:#fff;border-bottom:3px solid #217346;box-sizing:border-box;color:#217346;font:700 15px "Liberation Sans",sans-serif;display:flex;align-items:center;justify-content:center;flex:none;margin-left:30px}</style><div class="sb"><div class="btn"><x-ico n="tl"></x-ico></div><div class="tr"></div><div class="th"></div><div class="btn"><x-ico n="tr"></x-ico></div></div><div class="cell" style="width:32px;height:28px"><x-ico n="dots"></x-ico></div><div class="sp"></div><div class="cell" style="width:24px"><x-ico n="add"></x-ico></div><div class="tab"><slot></slot></div><div class="cell" style="width:30px"></div><div class="cell" style="width:27px"><x-ico n="ntl"></x-ico></div><div class="cell" style="width:26px"><x-ico n="ntr"></x-ico></div><div style="width:17px"></div>`}}
class XStatus extends HTMLElement{constructor(){super();this.attachShadow({mode:'open'}).innerHTML=`<style>:host{display:flex;flex:1;min-height:0;background:#666;direction:ltr;color:#f0f0f0;font-size:13px;align-items:stretch}.cell{flex:none;display:flex;align-items:center;justify-content:center}.sp{flex:1}</style><div class="cell" style="padding-left:11px;justify-content:flex-start;width:40px;font:12.5px 'Open Sans',sans-serif">70%</div><div class="cell" style="width:24px;font-size:17px">+</div><div class="cell" style="width:125px"><x-ico n="slider"></x-ico></div><div class="cell" style="width:22px;font-size:17px">−</div><div class="cell" style="width:50px"><x-ico n="v1"></x-ico></div><div class="cell" style="width:51px"><x-ico n="v2"></x-ico></div><div class="cell" style="width:50px;background:#454545"><x-ico n="v3"></x-ico></div><div class="cell" style="margin-left:24px" dir="rtl"><slot name="count"></slot></div><div class="sp"></div><div class="cell" style="padding-right:10px" dir="rtl"><slot></slot></div>`}}
[['x-ico',XIco],['x-t',XT],['x-sep',XSep],['x-big',XBig],['x-small',XSmall],['x-group',XGroup],['x-ribbon',XRibbon],['x-titlebar',XTitlebar],['x-tabs',XTabs],['x-tab',XTab],['x-formula',XFormula],['x-vscroll',XVScroll],['x-sheet',XSheet],['x-foot',XFoot],['x-status',XStatus]].forEach(([n,c])=>customElements.define(n,c));
</script>
</body></html>
